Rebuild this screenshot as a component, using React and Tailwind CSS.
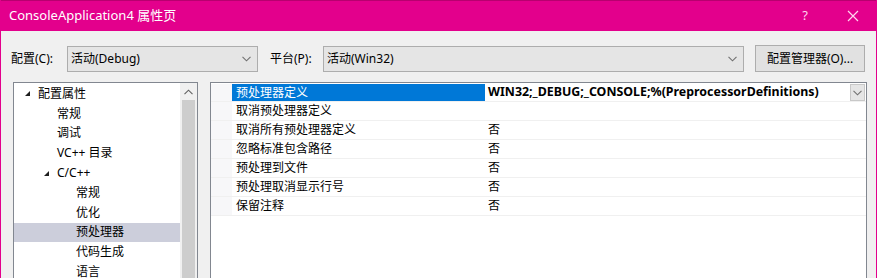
import React from 'react';

const font = { fontFamily: '"Noto Sans", "Noto Sans CJK SC", sans-serif' };

const treeItems = [
  { label: '配置属性', level: 0, open: true },
  { label: '常规', level: 1 },
  { label: '调试', level: 1 },
  { label: 'VC++ 目录', level: 1 },
  { label: 'C/C++', level: 1, open: true },
  { label: '常规', level: 2 },
  { label: '优化', level: 2 },
  { label: '预处理器', level: 2, selected: true },
  { label: '代码生成', level: 2 },
  { label: '语言', level: 2 },
];

const props = [
  { name: '预处理器定义', value: 'WIN32;_DEBUG;_CONSOLE;%(PreprocessorDefinitions)', active: true },
  { name: '取消预处理器定义', value: '' },
  { name: '取消所有预处理器定义', value: '否' },
  { name: '忽略标准包含路径', value: '否' },
  { name: '预处理到文件', value: '否' },
  { name: '预处理取消显示行号', value: '否' },
  { name: '保留注释', value: '否' },
];

function Chevron({ up }) {
  return (
    <svg width="9" height="6" viewBox="0 0 9 6" className={up ? 'rotate-180' : ''}>
      <path d="M0.5 0.8 L4.5 4.8 L8.5 0.8" fill="none" stroke={up ? '#606060' : '#707070'} strokeWidth="1.1" />
    </svg>
  );
}

function Combo({ width, text }) {
  return (
    <div className={`${width} h-[26px] flex items-center justify-between border border-[#adadad] bg-[#e5e5e5] pl-[3px] pr-[6px]`}>
      <span>{text}</span>
      <Chevron />
    </div>
  );
}

// 树节点前的展开三角
function Expander() {
  return (
    <svg width="7" height="7" viewBox="0 0 7 7">
      <path d="M6 1 L6 6 L1 6 Z" fill="#1e1e1e" />
    </svg>
  );
}

export default function App() {
  return (
    <div
      style={font}
      className="w-[877px] h-[278px] overflow-hidden bg-[#f0f0f0] border-l border-r border-[#e3008c] text-[12px] text-black flex flex-col"
    >
      {/* 标题栏 */}
      <div className="h-[31px] shrink-0 bg-[#e3008c] border-t border-[#b8006f] flex items-center text-white">
        <span className="pl-[8px] text-[13px]">ConsoleApplication4 属性页</span>
        <span className="ml-auto mr-[39px] text-[#ffd6ef] text-[13px]">?</span>
        <svg width="12" height="12" viewBox="0 0 12 12" className="mr-[17px]">
          <path d="M1 1 L11 11 M11 1 L1 11" stroke="#ffd6ef" strokeWidth="1.2" />
        </svg>
      </div>

      {/* 配置 / 平台 */}
      <div className="mt-[14px] h-[27px] shrink-0 flex items-center pl-[10px]">
        <span className="w-[56px]">配置(C):</span>
        <Combo width="w-[191px]" text="活动(Debug)" />
        <span className="ml-[12px] w-[53px]">平台(P):</span>
        <Combo width="w-[421px]" text="活动(Win32)" />
        <div className="ml-[11px] w-[110px] h-[27px] flex items-center justify-center border border-[#adadad] bg-[#e1e1e1]">
          配置管理器(O)...
        </div>
      </div>

      {/* 主体 */}
      <div className="mt-[10px] flex flex-1 min-h-0">
        {/* 树 */}
        <div className="ml-[12px] w-[185px] border border-[#828790] border-b-0 bg-white flex">
          <div className="flex-1 pt-[1px]">
            {treeItems.map((t, i) => (
              <div
                key={i}
                className={`h-[19.8px] flex items-center ${t.selected ? 'bg-[#cccedb]' : ''}`}
                style={{ paddingLeft: 10 + t.level * 19 }}
              >
                <span className="w-[14px] flex items-center">{t.open && <Expander />}</span>
                <span>{t.label}</span>
              </div>
            ))}
          </div>
          <div className="w-[17px] bg-[#f0f0f0] flex flex-col items-center">
            <div className="h-[17px] flex items-center justify-center">
              <Chevron up />
            </div>
            <div className="w-[13px] flex-1 bg-[#cdcdcd]" />
          </div>
        </div>

        {/* 属性网格 */}
        <div className="ml-[12px] w-[657px] border border-[#828790] border-b-0 bg-white">
          {props.map((p, i) => (
            <div key={i} className={`h-[19px] flex border-b border-[#f0f0f0] ${i === 0 ? 'pt-[1px]' : ''}`}>
              <div className="w-[21px] bg-[#f7f7f9]" />
              <div className={`w-[253px] pl-[4px] flex items-center ${p.active ? 'bg-[#0078d7] text-white' : ''}`}>
                {p.name}
              </div>
              <div className="flex-1 flex items-center pl-[3px]">
                <span className={p.active ? 'font-bold text-[12.4px]' : ''}>{p.value}</span>
                {p.active && (
                  <div className="ml-auto mr-[1px] w-[15px] h-[17px] bg-[#e5e5e5] border border-[#c8c8c8] flex items-center justify-center">
                    <Chevron />
                  </div>
                )}
              </div>
            </div>
          ))}
        </div>
      </div>
    </div>
  );
}
